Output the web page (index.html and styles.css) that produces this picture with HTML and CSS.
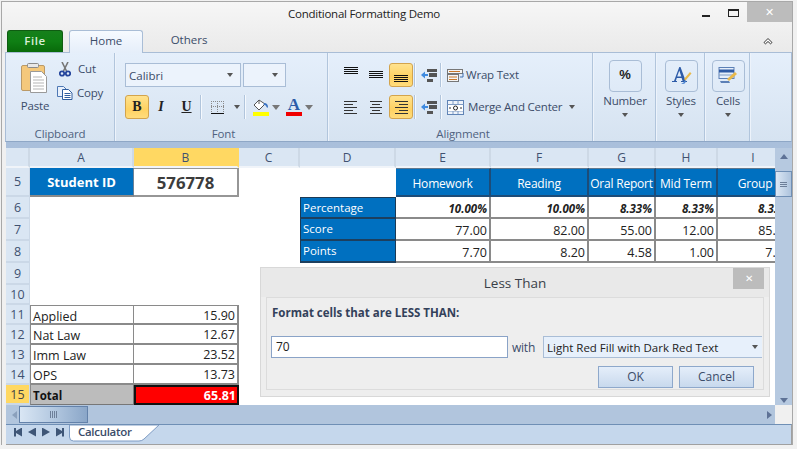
FILE: index.html
```html
<!DOCTYPE html>
<html lang="en">
<head>
<meta charset="utf-8">
<title>Conditional Formatting Demo</title>
<link rel="stylesheet" href="styles.css">
</head>
<body>
<div class="frame">
<div class="window">
  <header class="titlebar">
    <span class="title">Conditional Formatting Demo</span>
    <div class="winbtns">
      <span class="min"></span>
      <span class="max"></span>
      <span class="close">✕</span>
    </div>
  </header>
  <nav class="tabs">
    <span class="tab-file">File</span>
    <span class="tab-home">Home</span>
    <span class="tab-other">Others</span>
    <svg class="collapse" width="10" height="8" viewBox="0 0 10 8"><path d="M1 5.500 5 1.500 9 5.500 7.500 6.800 5 4.500 2.500 6.800Z" fill="#fff" stroke="#333" stroke-width="1"/></svg>
  </nav>
  <section class="ribbon">
    <div class="group g-clip">
      <div class="g-body clip-body">
        <div class="paste">
          <svg width="30" height="32" viewBox="0 0 30 32">
            <rect x="1.500" y="3.500" width="23" height="25" rx="1.500" fill="#f4c87c" stroke="#bb9a68"/>
            <rect x="7.500" y="1.500" width="11" height="4" rx="1" fill="#e8e8e8" stroke="#8b8b8b"/>
            <path d="M10.500 9.500h11l5 5v16h-16z" fill="#fff" stroke="#9a9a9a"/>
            <path d="M13 15h9M13 18h11M13 21h11M13 24h11M13 27h11" stroke="#b5b5b5"/>
          </svg>
          <span class="rlabel">Paste</span>
        </div>
        <div class="clip-small">
          <div class="small-row">
            <svg width="12" height="15" viewBox="0 0 12 15"><path d="M3 0 7.500 9M9 0 4.500 9" stroke="#777" stroke-width="1.600" fill="none"/><circle cx="3" cy="11.500" r="2.200" fill="none" stroke="#25459c" stroke-width="1.800"/><circle cx="9" cy="11.500" r="2.200" fill="none" stroke="#25459c" stroke-width="1.800"/></svg>
            <span class="rlabel">Cut</span>
          </div>
          <div class="small-row copy-row">
            <svg width="16" height="14" viewBox="0 0 16 14"><path d="M.5.500h6l3 3v7h-9z" fill="#e8f0fb" stroke="#4e78b5"/><path d="M5.500 3.500h6l3.500 3.500v6.500h-9.500z" fill="#fff" stroke="#2f5d9f"/><path d="M7.500 7.500h6M7.500 9.500h6M7.500 11.500h6" stroke="#2f5d9f"/></svg>
            <span class="rlabel">Copy</span>
          </div>
        </div>
      </div>
      <div class="g-cap">Clipboard</div>
    </div>

    <div class="group g-font">
      <div class="g-body font-body">
        <div class="font-row">
          <div class="combo combo-name"><span>Calibri</span><i class="arrow"></i></div>
          <div class="combo combo-size"><i class="arrow"></i></div>
        </div>
        <div class="font-row">
          <span class="fbtn on fb">B</span>
          <span class="fbtn fi">I</span>
          <span class="fbtn fu">U</span>
          <span class="sep"></span>
          <div class="ftool ft-border">
            <svg width="15" height="15" viewBox="0 0 15 15"><path d="M1.500 1v11M7.500 1v11M13.500 1v11M1 1.500h13M1 6.500h13" stroke="#8a8a8a" stroke-dasharray="1 1"/><path d="M1 13.500h13" stroke="#111"/></svg>
            <i class="arrow"></i>
          </div>
          <span class="sep"></span>
          <div class="ftool ft-fill">
            <div class="swatch-ico">
              <svg width="16" height="12" viewBox="0 0 16 12"><path d="M6 1 1 6l5 5 6-6z" fill="#fff" stroke="#555"/><path d="M6 1v4" stroke="#555"/><path d="M11 4c3 0 4 2 4 4 0 1-1 1-1.500 0-.5-2-2-2-3-2z" fill="#3b74c4"/></svg>
              <b class="sw-y"></b>
            </div>
            <i class="arrow big"></i>
          </div>
          <div class="ftool ft-color">
            <div class="swatch-ico">
              <span class="a-glyph">A</span>
              <b class="sw-r"></b>
            </div>
            <i class="arrow big"></i>
          </div>
        </div>
      </div>
      <div class="g-cap cap-font">Font</div>
    </div>

    <div class="group g-align">
      <div class="g-body align-body">
        <div class="align-row">
          <span class="abtn up"><svg width="14" height="8" viewBox="0 0 14 8"><path d="M0 .5h14M0 2.500h14M0 4.500h14M0 6.500h14" stroke="#111" stroke-width="1"/></svg></span>
          <span class="abtn"><svg width="14" height="8" viewBox="0 0 14 8"><path d="M0 .5h14M0 2.500h14M0 4.500h14M0 6.500h14" stroke="#111" stroke-width="1"/></svg></span>
          <span class="abtn on low"><svg width="14" height="8" viewBox="0 0 14 8"><path d="M0 .5h14M0 2.500h14M0 4.500h14M0 6.500h14" stroke="#111" stroke-width="1"/></svg></span>
          <span class="sep"></span>
          <span class="indent"><svg width="17" height="15" viewBox="0 0 17 15"><path d="M1 7 5 3.500v7z" fill="#3f8be0"/><path d="M4 7h4" stroke="#3f8be0" stroke-width="2"/><path d="M7 1h10v3h-10zM7 11h6v3h-6zM9 5h8v4h-8z" fill="#555"/></svg></span>
          <span class="sep"></span>
          <span class="wrap-ico"><svg width="17" height="15" viewBox="0 0 17 15"><rect x=".5" y="1.500" width="15" height="4" fill="#f5f5f5" stroke="#777"/><path d="M2 3.500h11" stroke="#c8782a"/><rect x=".5" y="6.500" width="11" height="7" fill="#f5f5f5" stroke="#777"/><path d="M2 9h8M2 11.500h8" stroke="#c8782a"/><path d="M16 5v4h-3" fill="none" stroke="#3f6fb0"/></svg></span>
          <span class="rlabel wrap-t">Wrap Text</span>
        </div>
        <div class="align-row">
          <span class="abtn"><svg width="14" height="13" viewBox="0 0 14 13"><path d="M0 .5h13M0 3.500h9M0 6.500h13M0 9.500h9M0 12.500h13" stroke="#333"/></svg></span>
          <span class="abtn"><svg width="14" height="13" viewBox="0 0 14 13"><path d="M1 .5h12M3 3.500h8M1 6.500h12M3 9.500h8M1 12.500h12" stroke="#333"/></svg></span>
          <span class="abtn on"><svg width="14" height="13" viewBox="0 0 14 13"><path d="M1 .5h13M5 3.500h9M1 6.500h13M5 9.500h9M1 12.500h13" stroke="#333"/></svg></span>
          <span class="sep"></span>
          <span class="indent"><svg width="17" height="15" viewBox="0 0 17 15"><path d="M1 7 5 3.500v7z" fill="#3f8be0"/><path d="M4 7h4" stroke="#3f8be0" stroke-width="2"/><path d="M7 1h10v3h-10zM7 11h6v3h-6zM9 5h8v4h-8z" fill="#555"/></svg></span>
          <span class="sep"></span>
          <span class="wrap-ico merge-ico"><svg width="17" height="15" viewBox="0 0 17 15"><rect x=".5" y=".5" width="16" height="14" fill="#eef3fa" stroke="#5f83b5"/><path d="M.5 4.500h16M.5 11h16M6 .5v4M11 .5v4M6 11v3M11 11v3" stroke="#7f9cc4"/><rect x="1" y="5" width="15" height="6" fill="#fff"/><path d="M2 8h2M13 8h2" stroke="#333"/><circle cx="8.500" cy="8" r="2" fill="none" stroke="#222"/></svg></span>
          <span class="rlabel merge-t">Merge And Center</span>
          <i class="arrow merge-a"></i>
        </div>
      </div>
      <div class="g-cap cap-align">Alignment</div>
    </div>

    <div class="group g-num big-group">
      <span class="bigbtn"><span class="pct">%</span></span>
      <span class="rlabel">Number</span>
      <i class="arrow"></i>
    </div>
    <div class="group g-sty big-group">
      <span class="bigbtn">
        <svg width="22" height="22" viewBox="0 0 22 22"><path d="M2 17h5v-1H5.800l1-3h4.800l1 3H11v1h6v-1h-1.300L10.500 2H9.300L4 16H2zM7.200 11.500 9.300 5.600l2 5.900z" fill="#2d5ba8" fill-rule="evenodd"/><path d="M14 14l6-7 1.500 1.500-6 7z" fill="#e9b94a"/><path d="M11 18.500c2 0 3-1 3.500-3l1.500 1c-1 2.500-3 3-5 2z" fill="#4b84d0"/></svg>
      </span>
      <span class="rlabel">Styles</span>
      <i class="arrow"></i>
    </div>
    <div class="group g-cel big-group">
      <span class="bigbtn">
        <svg width="22" height="20" viewBox="0 0 22 20"><rect x="2" y="1.500" width="15" height="11" fill="#e6effa" stroke="#5c80b6"/><path d="M2 5h15" stroke="#2f5ba5" stroke-width="3"/><path d="M2 9h15" stroke="#7f9cc4"/><path d="M3 15h9l1 2H4z" fill="#5c80b6"/><path d="M10 13l8-7 2 2-8 7z" fill="#e9b94a"/></svg>
      </span>
      <span class="rlabel">Cells</span>
      <i class="arrow"></i>
    </div>
  </section>

  <main class="workarea">
    <div class="sheet-wrap">
      <div class="grid">
        <div class="hd"></div><div class="hd">A</div><div class="hd sel">B</div><div class="hd">C</div><div class="hd">D</div><div class="hd">E</div><div class="hd">F</div><div class="hd">G</div><div class="hd">H</div><div class="hd hd-i">I</div>

        <div class="rh">5</div><div class="c blue bold ctr dk-r">Student ID</div><div class="c id">576778</div><div class="c"></div><div class="c"></div><div class="c blue ctr hb">Homework</div><div class="c blue ctr hb">Reading</div><div class="c blue ctr hb">Oral Report</div><div class="c blue ctr hb">Mid Term</div><div class="c blue ctr hb">Group</div>

        <div class="rh">6</div><div class="c"></div><div class="c"></div><div class="c"></div><div class="c blue lab lab-top">Percentage</div><div class="c v pi">10.00%</div><div class="c v pi">10.00%</div><div class="c v pi">8.33%</div><div class="c v pi">8.33%</div><div class="c v pi">8.33%</div>

        <div class="rh">7</div><div class="c"></div><div class="c"></div><div class="c"></div><div class="c blue lab">Score</div><div class="c v">77.00</div><div class="c v">82.00</div><div class="c v">55.00</div><div class="c v">12.00</div><div class="c v">85.00</div>

        <div class="rh">8</div><div class="c"></div><div class="c"></div><div class="c"></div><div class="c blue lab">Points</div><div class="c v">7.70</div><div class="c v">8.20</div><div class="c v">4.58</div><div class="c v">1.00</div><div class="c v">7.08</div>

        <div class="rh">9</div><div class="c"></div><div class="c"></div><div class="c"></div><div class="c"></div><div class="c"></div><div class="c"></div><div class="c"></div><div class="c"></div><div class="c"></div>
        <div class="rh">10</div><div class="c"></div><div class="c"></div><div class="c"></div><div class="c"></div><div class="c"></div><div class="c"></div><div class="c"></div><div class="c"></div><div class="c"></div>

        <div class="rh">11</div><div class="c t t1 tl">Applied</div><div class="c t t1 tv">15.90</div><div class="c"></div><div class="c"></div><div class="c"></div><div class="c"></div><div class="c"></div><div class="c"></div><div class="c"></div>
        <div class="rh">12</div><div class="c t tl">Nat Law</div><div class="c t tv">12.67</div><div class="c"></div><div class="c"></div><div class="c"></div><div class="c"></div><div class="c"></div><div class="c"></div><div class="c"></div>
        <div class="rh">13</div><div class="c t tl">Imm Law</div><div class="c t tv">23.52</div><div class="c"></div><div class="c"></div><div class="c"></div><div class="c"></div><div class="c"></div><div class="c"></div><div class="c"></div>
        <div class="rh">14</div><div class="c t tl">OPS</div><div class="c t tv">13.73</div><div class="c"></div><div class="c"></div><div class="c"></div><div class="c"></div><div class="c"></div><div class="c"></div><div class="c"></div>
        <div class="rh sel">15</div><div class="c total">Total</div><div class="c red">65.81</div><div class="c"></div><div class="c"></div><div class="c"></div><div class="c"></div><div class="c"></div><div class="c"></div><div class="c"></div>
      </div>

      <div class="vscroll">
        <i class="v-up"></i>
        <span class="v-thumb"><b></b></span>
        <i class="v-down"></i>
      </div>

      <div class="dialog">
        <div class="dlg-head">
          <span>Less Than</span>
          <span class="dlg-x">✕</span>
        </div>
        <div class="dlg-box">
          <div class="dlg-q">Format cells that are LESS THAN:</div>
          <div class="dlg-row">
            <span class="input">70</span>
            <span class="with">with</span>
            <span class="select"><span>Light Red Fill with Dark Red Text</span><i class="arrow"></i></span>
          </div>
          <div class="dlg-btns">
            <span class="btn">OK</span>
            <span class="btn">Cancel</span>
          </div>
        </div>
      </div>
    </div>

    <div class="hscroll">
      <i class="h-left"></i>
      <span class="h-thumb"><b></b></span>
      <i class="h-right"></i>
    </div>
    <div class="tabbar">
      <div class="navs">
        <i class="nav first"></i><i class="nav prev"></i><i class="nav next"></i><i class="nav last"></i>
      </div>
      <div class="sheet-tab">
        <svg class="sheet-shape" width="90" height="17" viewBox="0 0 90 17"><path d="M.5 0V12q0 4 4 4H70q3 0 5-2L90 0z" fill="#fff" stroke="#7f9cc4"/></svg>
        <span>Calculator</span>
      </div>
    </div>
  </main>
</div>
</div>
</body>
</html>
```

FILE: styles.css
```css
* { box-sizing: border-box; }
html, body { margin: 0; padding: 0; background: #fff; }
body { width: 800px; height: 450px; overflow: hidden; font-family: "Open Sans", "Liberation Sans", sans-serif; }
i { display: block; font-style: normal; }

.frame { width: 797px; height: 449px; padding: 1px 4px 4px 1px; background: #f1f1f1; }
.window {
  width: 792px; height: 444px;
  display: flex; flex-direction: column;
  border: 1px solid #a8a8a8; border-width: 1px 1px 0 1px;
  background: linear-gradient(#f6f6f6, #eaeaea 50px, #f0f0f0 52px);
}

/* Title bar */
.titlebar { height: 28px; flex: none; position: relative; display: flex; justify-content: center; padding: 4px 66px 0 0; }
.title { font-size: 11.500px; letter-spacing: -.25px; line-height: 16px; color: #222; }
.winbtns { position: absolute; top: 0; right: 0; display: flex; height: 20px; }
.min { width: 8px; height: 2px; background: #222; margin: 13px 18px 0 0; }
.max { width: 11px; height: 8px; border: 1px solid #222; border-top-width: 2px; margin: 7px 8px 0 0; }
.close { width: 45px; height: 20px; background: #bcbcbc; color: #fff; font-size: 11px; line-height: 20px; text-align: center; }

/* Tabs */
.tabs { height: 22px; flex: none; display: flex; position: relative; padding-left: 5px; font-size: 11.500px; color: #3b4c69; }
.tab-file { width: 56px; height: 22px; border: 1px solid #0f5c12; border-bottom: 0; border-radius: 3px 3px 0 0; background: linear-gradient(#16801b, #0f7f14 50%, #086a0a); color: #d9efd9; font-weight: 600; letter-spacing: .6px; text-align: center; line-height: 20px; }
.tab-home { width: 74px; height: 23px; margin-left: 6px; border: 1px solid #a9bdd6; border-bottom: 0; border-radius: 3px 3px 0 0; background: linear-gradient(#f6faff, #e5eefa); text-align: center; line-height: 20px; position: relative; z-index: 1; }
.tab-other { width: 92px; text-align: center; line-height: 20px; }
.collapse { position: absolute; right: 19px; top: 7px; }

/* Ribbon */
.ribbon { height: 90px; flex: none; margin-left: 3px; display: flex; border: 1px solid #a9bdd6; border-bottom: 1px solid #8ea7c6; background: linear-gradient(#e5effb, #d6e3f1); color: #3b4c69; }
.group { flex: none; display: flex; flex-direction: column; border-right: 1px solid #b1c5dc; box-shadow: 1px 0 0 #edf3fb; }
.g-clip { width: 109px; }
.g-font { width: 213px; }
.g-align { width: 265px; }
.g-body { flex: 1; }
.g-cap { height: 18px; flex: none; padding-top: 3px; font-size: 11.500px; letter-spacing: -.15px; line-height: 16px; text-align: center; color: #4f6280; }
.cap-font { padding-left: 5px; }
.cap-align { padding-left: 6px; }
.rlabel { font-size: 11.500px; letter-spacing: -.2px; line-height: 16px; white-space: nowrap; color: #3b4c69; }

.arrow { width: 0; height: 0; border: 3px solid transparent; border-top: 4px solid #555; border-bottom: 0; }
.arrow.big { border-width: 5px 4px 0; border-top-color: #777; }

.clip-body { display: flex; padding: 9px 0 0 14px; }
.paste { width: 30px; display: flex; flex-direction: column; align-items: center; }
.paste svg { flex: none; margin-bottom: 4px; }
.clip-small { margin: -1px 0 0 7px; display: flex; flex-direction: column; gap: 8px; }
.small-row { height: 16px; display: flex; align-items: center; padding-left: 2px; gap: 7px; }
.copy-row { padding-left: 0; gap: 4px; }

.font-body { padding: 10px 0 0 10px; display: flex; flex-direction: column; gap: 8px; }
.font-row { display: flex; height: 24px; align-items: center; }
.combo { height: 24px; border: 1px solid #a9bdd6; background: #ecf3fc; display: flex; align-items: center; justify-content: space-between; padding: 0 7px 0 3px; font-size: 11.500px; }
.combo-name { width: 116px; }
.combo-size { width: 43px; margin-left: 2px; justify-content: flex-end; }
.fbtn { width: 24px; height: 24px; display: flex; align-items: center; justify-content: center; font-family: "Liberation Serif", serif; font-weight: 700; font-size: 14px; color: #222; }
.fbtn.on, .abtn.on { border: 1px solid #d3a44c; border-radius: 3px; background: linear-gradient(#ffe28e, #ffd262 60%, #ffdc7c); }
.fi { font-style: italic; }
.fu { text-decoration: underline; width: 27px; }
.sep { width: 2px; height: 24px; flex: none; background: #f5f9fe; border-left: 1px solid #b1c5dc; }
.ftool { display: flex; align-items: center; height: 24px; }
.ft-border { width: 42px; padding-left: 8px; gap: 9px; }
.ft-fill { width: 38px; padding-left: 7px; gap: 3px; }
.ft-color { padding-left: 2px; gap: 3px; }
.swatch-ico { width: 16px; display: flex; flex-direction: column; align-items: center; }
.swatch-ico b { display: block; width: 16px; height: 4px; margin-top: 1px; }
.sw-y { background: #ffff00; }
.sw-r { background: #f00000; }
.a-glyph { font-family: "Liberation Serif", serif; font-weight: 700; font-size: 17px; line-height: 13px; color: #2d5ba8; }

.align-body { padding: 10px 0 0 11px; display: flex; flex-direction: column; gap: 8px; }
.align-row { display: flex; height: 24px; align-items: center; }
.abtn { width: 24px; height: 24px; margin-right: 1px; display: flex; align-items: center; justify-content: center; }
.abtn.up { padding-bottom: 8px; }
.abtn.low { padding-top: 7px; }
.indent { width: 24px; display: flex; justify-content: center; }
.wrap-ico { width: 24px; padding-left: 5px; flex: none; display: flex; }
.wrap-t { margin-left: 0; }
.merge-t { margin-left: 2px; }
.merge-a { margin-left: 7px; }

.big-group { align-items: center; padding: 7px 0 0 2px; }
.g-num { width: 63px; }
.g-sty { width: 49px; }
.g-cel { width: 45px; }
.bigbtn { width: 33px; height: 32px; border: 1px solid #a9bdd6; border-radius: 4px; display: flex; align-items: center; justify-content: center; flex: none; margin-bottom: 1px; }
.pct { font-family: "Liberation Sans", sans-serif; font-weight: 700; font-size: 13px; color: #222; margin-top: -4px; }
.big-group .arrow { margin-top: 4px; }

/* Work area */
.workarea { flex: 1; margin-left: 4px; display: flex; flex-direction: column; min-height: 0; }
.sheet-wrap { position: relative; height: 263px; flex: none; display: flex; padding-top: 6px; background: linear-gradient(#a9bfdb, #b6c9e0); }
.grid {
  width: 769px; height: 257px; flex: none;
  display: grid; overflow: hidden; background: #fff;
  grid-template-columns: 24px 104px 105px 61px 96px 95px 98px 67px 62px 76px;
  grid-template-rows: 20px 29px 22px 22px 22px 22px 20px 20px 20px 20px 20px 20px;
  font-size: 12.500px;
  color: #222;
}
.hd { background: #dae6f3; border-right: 2px solid #cdd9e6; border-bottom: 2px solid #f0f4f9; color: #3f5170; text-align: center; line-height: 19px; font-size: 12px; }
.hd.sel { background: #ffd862; border-right-color: #ffd862; }
.hd-i { padding-right: 4px; }
.rh { background: #dae6f3; border-bottom: 2px solid #cbd8e7; border-right: 1px solid #cbd8e7; color: #3f5170; display: flex; align-items: center; justify-content: center; font-size: 12.500px; }
.rh.sel { background: #ffd862; color: #444; }
.c { min-width: 0; line-height: 20px; white-space: nowrap; overflow: hidden; }
.blue { background: #0070c0; color: #fff; }
.bold { font-weight: 700; }
.ctr { text-align: center; line-height: 29px; }
.dk-r { border-right: 1px solid #6b8197; border-bottom: 2px solid #8a8a8a; font-size: 13px; }
.id { font-weight: 700; font-size: 16.800px; color: #3c3c3c; text-align: center; line-height: 28px; border: 2px solid #969696; border-width: 0 2px 2px 0; border-top: 1px solid #969696; }
.hb { border-right: 2px solid #1d4c78; border-bottom: 2px solid #1d4c78; border-top: 1px solid #60788e; font-size: 12px; letter-spacing: -.2px; }
.lab { border-left: 1px solid #1c3a55; border-right: 1px solid #1c3a55; border-bottom: 2px solid #1d3f5e; padding-left: 2px; font-size: 11.500px; line-height: 19px; }
.lab-top { border-top: 1px solid #1c3a55; }
.v { text-align: right; padding-right: 2px; border-right: 2px solid #8a8a8a; border-bottom: 2px solid #8a8a8a; line-height: 24px; }
.pi { font-style: italic; font-weight: 700; font-size: 11.500px; color: #222; }
.t { border: 1px solid #8a8a8a; border-width: 0 1px 2px 0; line-height: 22px; padding: 0 2px; }
.tl { border-left: 1px solid #8a8a8a; }
.t1 { border-top: 1px solid #8a8a8a; }
.tv { text-align: right; border-right: 2px solid #8a8a8a; line-height: 20px; }
.total { background: #bcbcbc; font-weight: 700; font-size: 11.500px; padding: 0 2px; line-height: 22px; border-left: 1px solid #8a8a8a; border-right: 1px solid #777; border-bottom: 1px solid #777; color: #111; }
.red { background: #ff0000; color: #fff; font-weight: 700; text-align: right; padding-right: 1px; border: 2px solid #111; line-height: 17px; font-size: 12.500px; }

.vscroll { flex: 1; position: relative; display: flex; flex-direction: column; align-items: center; background: #b6c9e0; }
.v-up { width: 0; height: 0; margin-top: 6px; border: 4px solid transparent; border-bottom: 5px solid #5e7296; border-top: 0; }
.v-thumb { width: 17px; height: 26px; margin-top: 12px; border: 1px solid #6f8fb5; background: linear-gradient(90deg, #dce8f5, #adc3dd); display: flex; align-items: center; justify-content: center; }
.v-thumb b { width: 7px; height: 5px; border-top: 1px solid #6d7f99; border-bottom: 1px solid #6d7f99; background: linear-gradient(transparent 40%, #6d7f99 40%, #6d7f99 60%, transparent 60%); }
.v-down { width: 0; height: 0; margin-top: auto; margin-bottom: 2px; border: 4px solid transparent; border-top: 5px solid #5e7296; border-bottom: 0; }

/* Dialog */
.dialog { position: absolute; left: 254px; top: 125px; width: 510px; height: 130px; background: #eeeeee; border: 1px solid #d8d8d8; padding: 0 5px; display: flex; flex-direction: column; }
.dlg-head { height: 29px; flex: none; margin: 0 -5px; background: #e9e9e9; position: relative; text-align: center; font-size: 13.500px; line-height: 30px; color: #3a3f48; }
.dlg-x { position: absolute; right: 5px; top: 0; width: 31px; height: 21px; background: #bcbcbc; color: #fff; font-size: 10px; line-height: 21px; text-align: center; }
.dlg-box { height: 93px; border: 1px solid #dcdcdc; padding: 5px 0 0 4px; display: flex; flex-direction: column; }
.dlg-q { height: 26px; padding-left: 1px; font-size: 11.500px; font-weight: 700; color: #33415a; line-height: 20px; }
.dlg-row { display: flex; height: 22px; margin-top: 7px; align-items: center; }
.input { width: 237px; height: 22px; padding-left: 4px; border: 1px solid #8aa3c7; background: #fff; font-size: 12px; line-height: 20px; color: #222; }
.with { width: 35px; padding-right: 4px; text-align: center; font-size: 12px; letter-spacing: -.2px; color: #3b4c69; }
.select { width: 219px; height: 22px; flex: none; border: 1px solid #a9bdd6; border-right: 0; background: #e7f0fb; display: flex; align-items: center; justify-content: space-between; padding: 0 4px 0 3px; font-size: 11.500px; color: #222; }
.dlg-btns { display: flex; justify-content: flex-end; gap: 6px; margin-top: 8px; padding-right: 9px; }
.btn { width: 75px; height: 22px; border: 1px solid #8ea8cb; background: linear-gradient(#e5eefa, #c8d9ed); text-align: center; font-size: 12px; line-height: 20px; color: #3b4c69; }

/* Horizontal scrollbar */
.hscroll { height: 19px; flex: none; width: 769px; background: #b1c5dd; display: flex; align-items: center; position: relative; }
.h-left { width: 0; height: 0; margin-left: 6px; border: 4px solid transparent; border-right: 5px solid #8ba0bc; border-left: 0; }
.h-thumb { width: 69px; height: 17px; margin-left: 2px; border: 1px solid #6482aa; background: linear-gradient(90deg, #d9e6f4, #b3c8e0 50%, #8aa6c8); display: flex; align-items: center; justify-content: center; }
.h-thumb b { width: 7px; height: 7px; background: repeating-linear-gradient(90deg, #6d7f99 0 1px, transparent 1px 2px); }
.h-right { margin-left: auto; margin-right: 3px; width: 0; height: 0; border: 4px solid transparent; border-left: 5px solid #5e7296; border-right: 0; }

/* Sheet tabs */
.tabbar { flex: 1; display: flex; min-height: 0; background: #c5d7ec; border-top: 1px solid #6f8fb5; border-bottom: 1px solid #a0a0a0; border-right: 1px solid #a0a0a0; }
.navs { width: 63px; display: flex; align-items: center; gap: 6px; padding: 0 0 5px 8px; }
.nav { width: 8px; height: 9px; background: #3f5677; }
.first { clip-path: polygon(0 0, 2px 0, 2px 40%, 100% 0, 100% 100%, 2px 60%, 2px 100%, 0 100%); }
.prev { clip-path: polygon(100% 0, 100% 100%, 0 50%); }
.next { clip-path: polygon(0 0, 100% 50%, 0 100%); }
.last { clip-path: polygon(0 0, 6px 40%, 6px 0, 100% 0, 100% 100%, 6px 100%, 6px 60%, 0 100%); }
.sheet-tab { position: relative; width: 90px; height: 17px; }
.sheet-shape { position: absolute; left: 0; top: 0; }
.sheet-tab span { position: relative; display: block; padding-left: 9px; font-size: 11.500px; letter-spacing: -.3px; font-weight: 600; line-height: 13px; color: #3b4c69; }
```
